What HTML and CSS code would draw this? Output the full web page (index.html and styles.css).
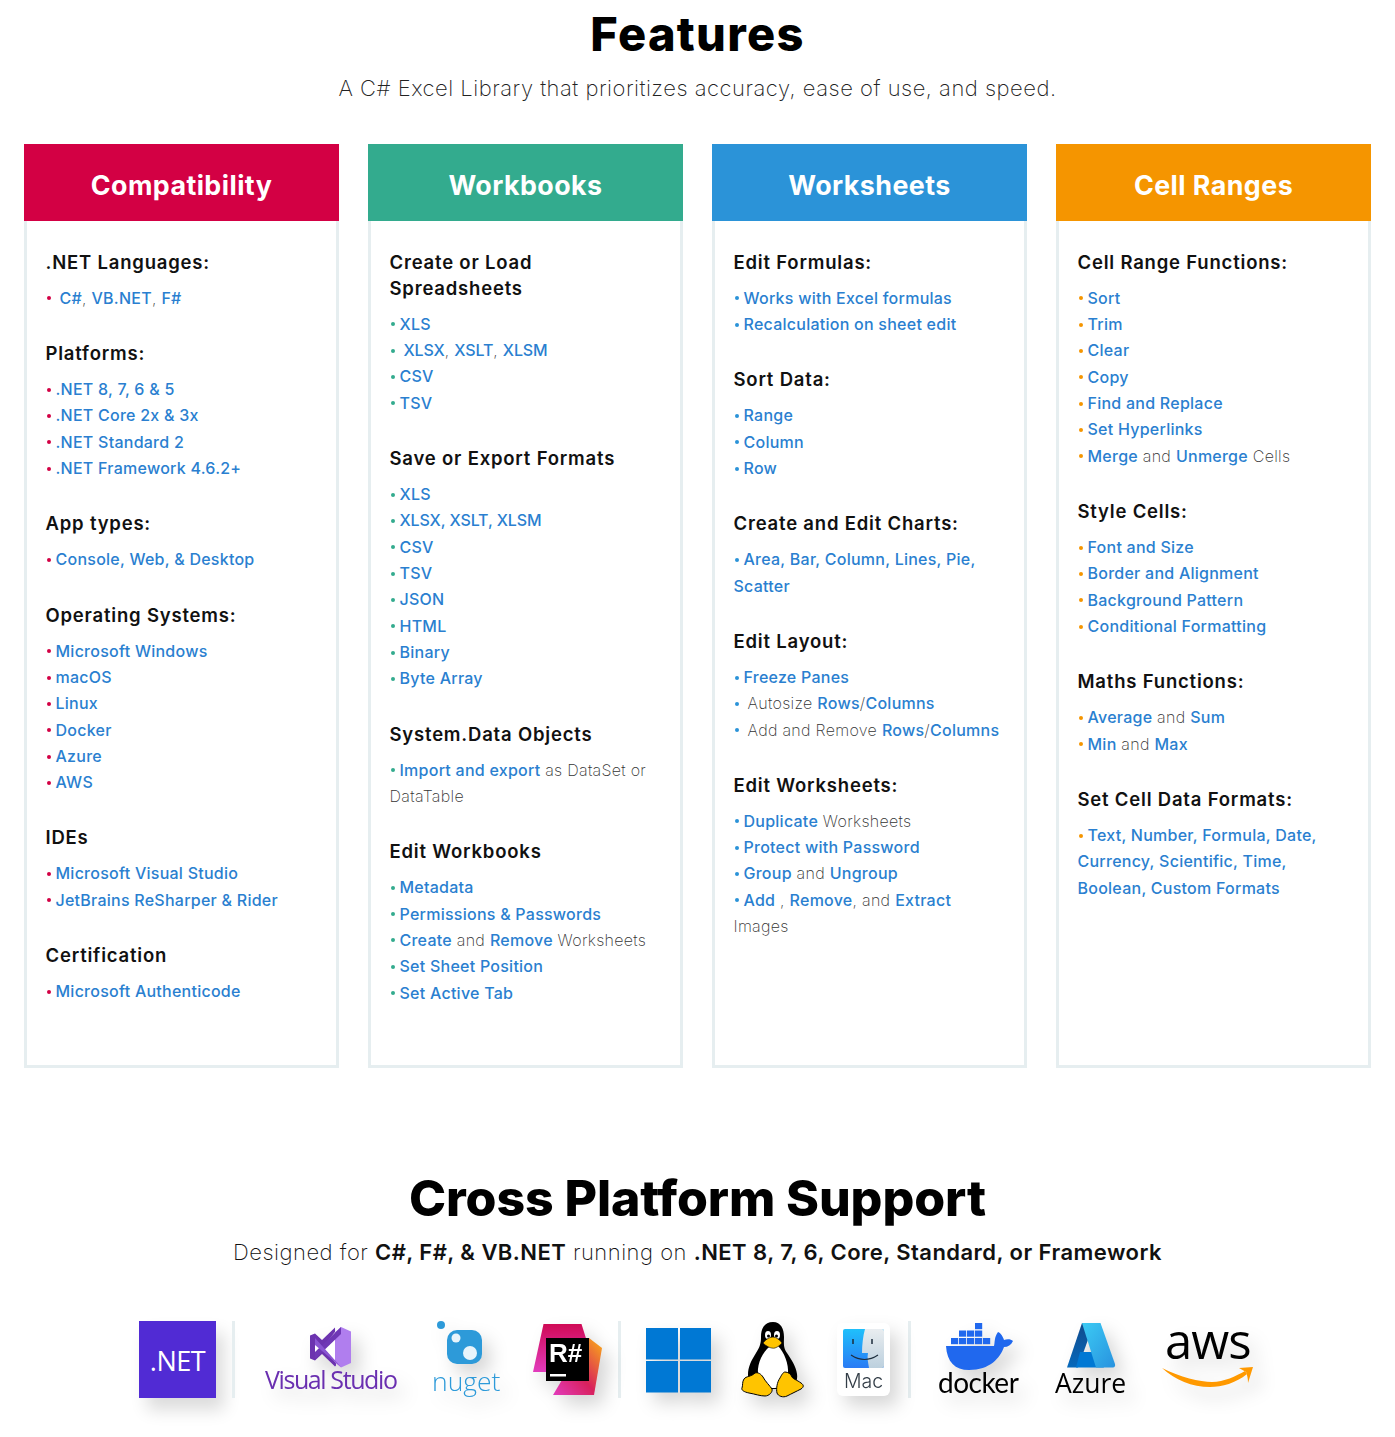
FILE: index.html
```html
<!DOCTYPE html>
<html lang="en">
<head>
<meta charset="utf-8">
<title>Features</title>
<link rel="stylesheet" href="styles.css">
</head>
<body>
<header class="intro">
  <h1 class="title">Features</h1>
  <p class="subtitle">A C# Excel Library that prioritizes accuracy, ease of use, and speed.</p>
</header>

<main class="grid">
  <section class="card card-red">
    <h2 class="card-head">Compatibility</h2>
    <div class="card-body">
      <div class="group"><h3>.NET Languages:</h3><ul>
        <li class="wide"><b>C#</b>, <b>VB.NET</b>, <b>F#</b></li></ul></div>
      <div class="group"><h3>Platforms:</h3><ul>
        <li><b>.NET 8, 7, 6 &amp; 5</b></li><li><b>.NET Core 2x &amp; 3x</b></li><li><b>.NET Standard 2</b></li><li><b>.NET Framework 4.6.2+</b></li></ul></div>
      <div class="group"><h3>App types:</h3><ul>
        <li><b>Console, Web, &amp; Desktop</b></li></ul></div>
      <div class="group"><h3>Operating Systems:</h3><ul>
        <li><b>Microsoft Windows</b></li><li><b>macOS</b></li><li><b>Linux</b></li><li><b>Docker</b></li><li><b>Azure</b></li><li><b>AWS</b></li></ul></div>
      <div class="group"><h3>IDEs</h3><ul>
        <li><b>Microsoft Visual Studio</b></li><li><b>JetBrains ReSharper &amp; Rider</b></li></ul></div>
      <div class="group"><h3>Certification</h3><ul>
        <li><b>Microsoft Authenticode</b></li></ul></div>
    </div>
  </section>

  <section class="card card-green">
    <h2 class="card-head">Workbooks</h2>
    <div class="card-body">
      <div class="group"><h3>Create or Load Spreadsheets</h3><ul>
        <li><b>XLS</b></li><li class="wide caps"><b>XLSX</b>, <b>XSLT</b>, <b>XLSM</b></li><li><b>CSV</b></li><li><b>TSV</b></li></ul></div>
      <div class="group"><h3>Save or Export Formats</h3><ul>
        <li><b>XLS</b></li><li class="caps"><b>XLSX, XSLT, XLSM</b></li><li><b>CSV</b></li><li><b>TSV</b></li><li><b>JSON</b></li><li><b>HTML</b></li><li><b>Binary</b></li><li><b>Byte Array</b></li></ul></div>
      <div class="group"><h3>System.Data Objects</h3><ul>
        <li><b>Import and export</b> as DataSet or DataTable</li></ul></div>
      <div class="group"><h3>Edit Workbooks</h3><ul>
        <li><b>Metadata</b></li><li><b>Permissions &amp; Passwords</b></li><li><b>Create</b> and <b>Remove</b> Worksheets</li><li><b>Set Sheet Position</b></li><li><b>Set Active Tab</b></li></ul></div>
    </div>
  </section>

  <section class="card card-blue">
    <h2 class="card-head">Worksheets</h2>
    <div class="card-body">
      <div class="group"><h3>Edit Formulas:</h3><ul>
        <li><b>Works with Excel formulas</b></li><li><b>Recalculation on sheet edit</b></li></ul></div>
      <div class="group"><h3>Sort Data:</h3><ul>
        <li><b>Range</b></li><li><b>Column</b></li><li><b>Row</b></li></ul></div>
      <div class="group"><h3>Create and Edit Charts:</h3><ul>
        <li><b>Area, Bar, Column, Lines, Pie, Scatter</b></li></ul></div>
      <div class="group"><h3>Edit Layout:</h3><ul>
        <li><b>Freeze Panes</b></li><li class="wide">Autosize <b>Rows</b>/<b>Columns</b></li><li class="wide">Add and Remove <b>Rows</b>/<b>Columns</b></li></ul></div>
      <div class="group"><h3>Edit Worksheets:</h3><ul>
        <li><b>Duplicate</b> Worksheets</li><li><b>Protect with Password</b></li><li><b>Group</b> and <b>Ungroup</b></li><li><b>Add</b> , <b>Remove</b>, and <b>Extract</b> Images</li></ul></div>
    </div>
  </section>

  <section class="card card-orange">
    <h2 class="card-head">Cell Ranges</h2>
    <div class="card-body">
      <div class="group"><h3>Cell Range Functions:</h3><ul>
        <li><b>Sort</b></li><li><b>Trim</b></li><li><b>Clear</b></li><li><b>Copy</b></li><li><b>Find and Replace</b></li><li><b>Set Hyperlinks</b></li><li><b>Merge</b> and <b>Unmerge</b> Cells</li></ul></div>
      <div class="group"><h3>Style Cells:</h3><ul>
        <li><b>Font and Size</b></li><li><b>Border and Alignment</b></li><li><b>Background Pattern</b></li><li><b>Conditional Formatting</b></li></ul></div>
      <div class="group"><h3>Maths Functions:</h3><ul>
        <li><b>Average</b> and <b>Sum</b></li><li><b>Min</b> and <b>Max</b></li></ul></div>
      <div class="group"><h3>Set Cell Data Formats:</h3><ul>
        <li><b>Text, Number, Formula, Date, Currency, Scientific, Time, Boolean, Custom Formats</b></li></ul></div>
    </div>
  </section>
</main>

<section class="platform">
  <h2 class="platform-title">Cross Platform Support</h2>
  <p class="platform-sub">Designed for <strong>C#, F#, &amp; VB.NET</strong> running on <strong>.NET 8, 7, 6, Core, Standard, or Framework</strong></p>
  <div class="logos">
    <div class="logo-net">.NET</div>
    <span class="rule r-net"></span>

    <svg class="logo l-vs" viewBox="265 1320 132 80" aria-label="Visual Studio">
      <path d="M310 1335.500l5-2 7 6.500 13-12.500 1 38-1 1-13-12.500-7 6.500-5-2z" fill="#6c33af"/>
      <path d="M335 1332v30l-12-15z" fill="#fff"/>
      <path d="M315 1340.500l7 6.500-7 6.500z" fill="#fff"/>
      <path d="M341 1327l10 4.500v31.500l-10 4.500-6-5v-30z" fill="#b07eee"/>
      <path d="M341 1327l-26 25 0 6 1 0 25-24z" fill="#6f37b5"/>
      <path d="M315 1338l26 29-6-5-20-17z" fill="#8a55d2"/>
      <text x="265" y="1389" class="t-vs">Visual Studio</text>
    </svg>

    <svg class="logo l-nuget" viewBox="432 1320 68 80" aria-label="nuget">
      <circle cx="441" cy="1325" r="4" fill="#2d9ad9"/>
      <rect x="447" y="1330" width="35" height="34" rx="10" fill="#2d9ad9"/>
      <circle cx="456" cy="1338" r="4.500" fill="#e8f4fb"/>
      <circle cx="470" cy="1353" r="7" fill="#e8f4fb"/>
      <text x="432" y="1391" class="t-nuget">nuget</text>
    </svg>

    <svg class="logo l-rs" viewBox="532 1320 72 80" aria-label="ReSharper">
      <defs>
        <linearGradient id="rsA" x1="0" y1="0" x2="0" y2="1"><stop offset="0" stop-color="#cf0a55"/><stop offset="1" stop-color="#e23bbd"/></linearGradient>
        <linearGradient id="rsB" x1="1" y1="0" x2="0" y2="1"><stop offset="0" stop-color="#fbb015"/><stop offset=".55" stop-color="#d8215c"/><stop offset="1" stop-color="#e23bbd"/></linearGradient>
      </defs>
      <path d="M543.500 1324h38l5 16-40 32h-13.500z" fill="url(#rsA)"/>
      <path d="M553 1395l19-32 17-25 13 10-8 47z" fill="url(#rsB)"/>
      <rect x="546" y="1338" width="43" height="43" fill="#000"/>
      <text x="549" y="1362" class="t-rs">R#</text>
      <rect x="550" y="1374" width="16" height="2.500" fill="#fff"/>
    </svg>

    <span class="rule r-rs"></span>

    <svg class="logo l-win" viewBox="646 1320 66 80" aria-label="Windows">
      <rect x="646" y="1328" width="32" height="31.500" fill="#0078d4"/>
      <rect x="680" y="1328" width="31" height="31.500" fill="#0078d4"/>
      <rect x="646" y="1361" width="32" height="31.500" fill="#0078d4"/>
      <rect x="680" y="1361" width="31" height="31.500" fill="#0078d4"/>
    </svg>

    <svg class="logo l-tux" viewBox="741 1320 62 80" aria-label="Linux">
      <path d="M773 1322c-9 0-12 7-12 15 0 6-1 10-5 16-5 8-8 14-8 22 0 6 3 11 7 14h36c4-3 7-9 6-15-1-8-6-15-10-21-4-5-3-11-3-16 0-8-3-15-11-15z" fill="#000"/>
      <path d="M772 1345c-7 4-13 14-14 24-1 9 5 18 14 19 10 1 16-5 16-14 1-10-4-22-10-28-2-2-4-2-6-1z" fill="#fff"/>
      <ellipse cx="768" cy="1335" rx="3" ry="4" fill="#fff"/>
      <ellipse cx="777" cy="1335" rx="3" ry="4" fill="#fff"/>
      <circle cx="768.500" cy="1336" r="1.500"/>
      <circle cx="776.500" cy="1336" r="1.500"/>
      <path d="M763 1343c3-4 7-6 10-6s7 3 9 6c-2 2-4 4-7 5-4 1-9-2-12-5z" fill="#ffc400" stroke="#000" stroke-width=".6"/>
      <path d="M755 1373c3-1 6 1 8 4 2 4 7 9 9 12 1 3-3 7-7 7-5 0-10-2-16-3-5-1-8-3-7-5 1-3 0-6 2-9 2-3 7-2 11-6z" fill="#ffc400" stroke="#000" stroke-width="1"/>
      <path d="M785 1372c3 0 6 2 7 5 1 2 5 3 9 6 3 2 3 4 0 6-4 2-10 5-14 7-4 2-9 0-10-3-1-4 0-11 3-15 1-2 3-6 5-6z" fill="#ffc400" stroke="#000" stroke-width="1"/>
    </svg>

    <svg class="logo l-mac" viewBox="836 1320 55 80" aria-label="Mac">
      <defs>
        <linearGradient id="macB" x1="0" y1="0" x2="0" y2="1"><stop offset="0" stop-color="#1fc0fb"/><stop offset="1" stop-color="#2a7bf5"/></linearGradient>
        <linearGradient id="macG" x1="0" y1="0" x2="0" y2="1"><stop offset="0" stop-color="#e9edf0"/><stop offset="1" stop-color="#bcd0de"/></linearGradient>
      </defs>
      <rect x="837" y="1323" width="53" height="73" rx="6" fill="#fff"/>
      <rect x="843" y="1329" width="41" height="39" rx="2" fill="url(#macB)"/>
      <path d="M865 1329h17a2 2 0 0 1 2 2v35a2 2 0 0 1-2 2h-13c-1-6-2-10-1-15h-6c0-8 1-17 3-24z" fill="url(#macG)"/>
      <path d="M851 1355c9 6 18 6 27 0" fill="none" stroke="#1c2c3c" stroke-width="1.200"/>
      <path d="M853 1339v5M872 1339v5" stroke="#1c2c3c" stroke-width="1.500"/>
      <text x="863.500" y="1388" class="t-mac">Mac</text>
    </svg>

    <span class="rule r-mac"></span>

    <svg class="logo l-docker" viewBox="938 1320 83 80" aria-label="docker">
      <g fill="#2068ee">
        <rect x="975" y="1323" width="7.200" height="6.200"/>
        <rect x="959" y="1330.500" width="7.200" height="6.200"/><rect x="967" y="1330.500" width="7.200" height="6.200"/><rect x="975" y="1330.500" width="7.200" height="6.200"/>
        <rect x="951" y="1338" width="7.200" height="6.200"/><rect x="959" y="1338" width="7.200" height="6.200"/><rect x="967" y="1338" width="7.200" height="6.200"/><rect x="975" y="1338" width="7.200" height="6.200"/><rect x="983" y="1338" width="7.200" height="6.200"/>
        <path d="M946 1346h48c1-3 0-9 4-14 3 1 5 5 6 8 3-1 7-1 9 1-2 4-5 6-9 6-4 11-14 23-35 23-14 0-22-8-23-24z"/>
      </g>
      <text x="938" y="1393" class="t-docker">docker</text>
    </svg>

    <svg class="logo l-azure" viewBox="1055 1320 72 80" aria-label="Azure">
      <defs>
        <linearGradient id="azA" x1="0" y1="0" x2="0" y2="1"><stop offset="0" stop-color="#114a8b"/><stop offset="1" stop-color="#0669bc"/></linearGradient>
        <linearGradient id="azB" x1="0" y1="0" x2="1" y2="1"><stop offset="0" stop-color="#3ccbf4"/><stop offset="1" stop-color="#2892df"/></linearGradient>
      </defs>
      <path d="M1082 1323h12l-16 44.500h-11z" fill="url(#azA)"/>
      <path d="M1080 1352h15l9 15.500h-28z" fill="#0078d4"/>
      <path d="M1082 1323h18.500l14.500 41c.5 2-.5 3.500-2 3.500h-17z" fill="url(#azB)"/>
      <text x="1055" y="1393" class="t-azure">Azure</text>
    </svg>

    <svg class="logo l-aws" viewBox="1162 1320 94 80" aria-label="aws">
      <text x="1165" y="1359" class="t-aws">aws</text>
      <path d="M1162 1368c18 9 38 14 50 14 12 0 24-6 33-11l2 3c-11 9-25 13-37 13-18 0-35-7-48-19z" fill="#f90"/>
      <path d="M1239 1368l14-1-5 16c0-5-1-8-2-11z" fill="#f90"/>
    </svg>
  </div>
</section>
</body>
</html>
```

FILE: styles.css
```css
* { box-sizing: border-box; }

html, body { margin: 0; padding: 0; background: #fff; }

body {
  font-family: Inter, "Noto Sans", sans-serif;
  color: #111;
  height: 1437px;
  overflow: hidden;
}

.intro { text-align: center; }

.title {
  margin: 0;
  font-size: 47px;
  line-height: 68px;
  font-weight: 800;
  letter-spacing: 1.300px;
  color: #000;
}

.subtitle {
  margin: 5px 0 0;
  font-size: 22px;
  line-height: 30px;
  font-weight: 200;
  letter-spacing: .5px;
  color: #222;
}

.grid {
  display: grid;
  grid-template-columns: repeat(4, 315px);
  column-gap: 29px;
  padding: 0 24px;
  margin-top: 41px;
}

.card { display: flex; flex-direction: column; }

.card-head {
  margin: 0;
  height: 77px;
  line-height: 83px;
  text-align: center;
  font-size: 26.800px;
  font-weight: 700;
  letter-spacing: .45px;
  color: #fff;
}

.card-body {
  flex: 1;
  padding: 27.800px 18px 59.300px 18.500px;
  border: 3px solid #e6eef0;
  border-top: 0;
}

.card-red .card-head { background: #d30044; }
.card-green .card-head { background: #33ab8e; }
.card-blue .card-head { background: #2b93d8; }
.card-orange .card-head { background: #f59500; }

.card-red li::before { background: #d30044; }
.card-green li::before { background: #33ab8e; }
.card-blue li::before { background: #2b93d8; }
.card-orange li::before { background: #f59500; }

.group { margin-bottom: 28.950px; }
.group:last-child { margin-bottom: 0; }

.group h3 {
  margin: 0;
  font-size: 18.500px;
  line-height: 26px;
  font-weight: 600;
  letter-spacing: .8px;
  color: #111;
}

.group ul { list-style: none; margin: 10px 0 0; padding: 0; }

.group li {
  font-size: 16px;
  line-height: 26.330px;
  font-weight: 200;
  letter-spacing: .3px;
  color: #333;
}

.group li::before {
  content: "";
  display: inline-block;
  width: 4px;
  height: 4px;
  border-radius: 50%;
  margin: 0 5px 2px 1px;
  vertical-align: middle;
}

.group li.wide::before { margin-right: 9px; }

.group li b { font-weight: 500; letter-spacing: .25px; color: #2a7fd0; }

.group li.caps b { letter-spacing: -.1px; }

.platform { margin-top: 94px; text-align: center; }

.platform-title {
  margin: 0;
  font-size: 50px;
  line-height: 72px;
  font-weight: 800;
  letter-spacing: -.1px;
  color: #000;
}

.platform-sub {
  margin: 3px 0 0;
  font-size: 22px;
  line-height: 30px;
  font-weight: 200;
  letter-spacing: .5px;
  color: #111;
}

.platform-sub strong { font-weight: 600; letter-spacing: .46px; color: #111; }

.logos {
  display: flex;
  align-items: flex-start;
  justify-content: center;
  height: 80px;
  margin-top: 53px;
}

.logo {
  display: block;
  flex: none;
  height: 80px;
  overflow: visible;
  filter: drop-shadow(8px 10px 9px rgba(0, 0, 0, .16));
}

.logo-net {
  flex: none;
  width: 77px;
  height: 77px;
  margin-top: 1px;
  background: #512bd4;
  color: #fff;
  font-family: "Open Sans", sans-serif;
  font-size: 27px;
  line-height: 79px;
  text-align: center;
  letter-spacing: -.5px;
  box-shadow: 8px 12px 16px rgba(0, 0, 0, .14);
}

.rule {
  flex: none;
  width: 3px;
  height: 77px;
  margin-top: 1px;
  background: #e6eef0;
}

.r-net { margin-left: 16px; }
.r-rs { margin-left: 14px; }
.r-mac { margin-left: 17px; }

.l-vs { width: 132px; margin-left: 30px; }
.l-nuget { width: 68px; margin-left: 35px; }
.l-rs { width: 72px; margin-left: 32px; }
.l-win { width: 66px; margin-left: 25px; }
.l-tux { width: 62px; margin-left: 29px; }
.l-mac { width: 55px; margin-left: 33px; }
.l-docker { width: 83px; margin-left: 27px; }
.l-azure { width: 72px; margin-left: 34px; }
.l-aws { width: 94px; margin-left: 35px; }

.t-vs { font-family: "Open Sans", sans-serif; font-size: 25px; fill: #6a2fb0; letter-spacing: -1.400px; }
.t-nuget { font-family: "Open Sans", sans-serif; font-size: 26.500px; font-weight: 300; fill: #2d9ad9; }
.t-rs { font-family: "Liberation Sans", sans-serif; font-size: 26px; font-weight: 700; fill: #fff; }
.t-mac { font-family: Inter, sans-serif; font-size: 19.500px; font-weight: 300; fill: #333d47; text-anchor: middle; }
.t-docker { font-family: Lato, sans-serif; font-size: 28px; fill: #000; letter-spacing: -.5px; }
.t-azure { font-family: "Open Sans", sans-serif; font-size: 26.500px; fill: #000; }
.t-aws { font-family: "Open Sans", sans-serif; font-size: 49px; font-weight: 500; letter-spacing: -1px; fill: #000; }
```
